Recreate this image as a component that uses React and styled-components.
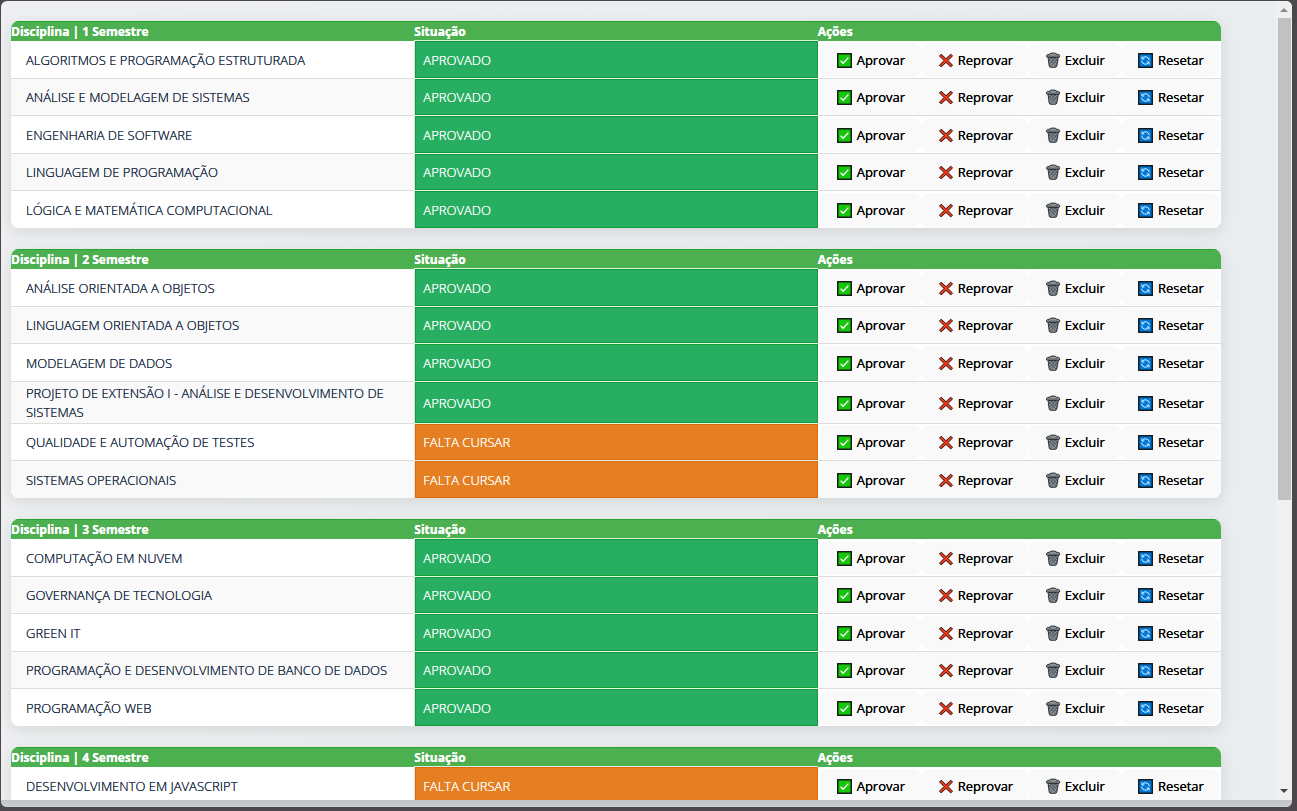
import React from "react";
import styled, { createGlobalStyle } from "styled-components";

const GlobalStyle = createGlobalStyle`
  * { box-sizing: border-box; }
  body {
    margin: 0;
    background: #4c484b;
    font-family: "Open Sans", "Noto Sans", sans-serif;
    overflow: hidden;
  }
`;

const Frame = styled.div`
  height: 100vh;
  padding: 1px 5px 4px 1px;
`;

const Window = styled.div`
  height: 100%;
  display: flex;
  flex-direction: column;
  border-radius: 6px;
  overflow: hidden;
  background: linear-gradient(to right, #edeff0, #e9edef);
`;

const Viewport = styled.div`
  flex: 1;
  min-height: 0;
  display: flex;
`;

const BottomEdge = styled.div`
  height: 7px;
  background: linear-gradient(#c0c4c5, #cdd0d1);
`;

const Content = styled.main`
  flex: 1;
  min-width: 0;
  overflow: hidden;
  display: flex;
  flex-direction: column;
  gap: 21px;
  padding: 20px 55px 0 10px;
`;

const Scrollbar = styled.div`
  width: 16px;
  display: flex;
  flex-direction: column;
  align-items: center;
  background: #f0f0f0;
`;

const ScrollArrow = styled.svg`
  width: 16px;
  height: 17px;
  flex: none;
`;

const Track = styled.div`
  flex: 1;
  width: 13px;
`;

const Thumb = styled.div`
  height: 63%;
  background: #c1c1c1;
`;

const Card = styled.section`
  flex: none;
  border-radius: 8px;
  overflow: hidden;
  background: #fff;
  box-shadow: 0 4px 16px rgba(0, 0, 0, 0.1);
`;

const Table = styled.table`
  width: 100%;
  table-layout: fixed;
  border-collapse: separate;
  border-spacing: 0;
`;

const HeadRow = styled.tr`
  height: 20px;
  background: #4caf50;
`;

const HeadCell = styled.th`
  padding: 0;
  text-align: left;
  font-size: 12px;
  line-height: 19px;
  font-weight: 700;
  color: #fff;
  text-shadow: 0 0 0 currentColor;
  border-top: 1px solid #25a52f;
  box-shadow: ${(p) => (p.$underlined ? "inset 0 -1px 0 #d9f2dc" : "none")};
`;

const Row = styled.tr`
  height: 38px;
  background: #fff;
  &:nth-child(even) {
    height: 37px;
    background: #f9f9f9;
  }
  &:nth-child(n + 5) {
    height: 37px;
  }
  &:last-child > td {
    border-bottom: 0;
  }
`;

const Cell = styled.td`
  padding: 0;
  border-bottom: 1px solid #dddddd;
`;

const NameCell = styled(Cell)`
  padding: 2px 15px 1px;
  font-size: 13px;
  line-height: 19px;
  font-weight: 300;
  color: #10253c;
  text-shadow: 0 0 0 currentColor;
`;

const StatusCell = styled(Cell)`
  padding: 1px 8px 0;
  font-size: 13px;
  line-height: 19px;
  font-weight: 300;
  color: #fff;
  text-shadow: 0 0 0 currentColor;
  border-left: 1px solid #e0e4e2;
  border-bottom-color: #e4f5e8;
  background: ${(p) => (p.$done ? "#27ae60" : "#e67e22")};
  box-shadow: inset 0 0 0 1px ${(p) => (p.$done ? "#129c3c" : "#dd6a10")};
`;

const Actions = styled.div`
  display: grid;
  grid-template-columns: 101fr 107fr 93fr 98fr;
  padding: 0 2px;
`;

const ActionButton = styled.button`
  height: 34px;
  display: flex;
  align-items: center;
  gap: 4px;
  padding: 0 0 0 17px;
  border: 0;
  border-radius: 8px;
  background: #f9f9f9;
  color: #000;
  font-family: inherit;
  font-size: 13px;
  font-weight: 400;
  text-shadow: 0 0 0 currentColor;
  white-space: nowrap;
  cursor: pointer;
`;

const Icon = styled.svg`
  width: 16px;
  height: 16px;
  flex: none;
`;

const CheckIcon = () => (
  <Icon viewBox="0 0 16 16" aria-hidden="true">
    <rect x="0.75" y="1.75" width="13.5" height="13.5" fill="#16c60c" stroke="#111" strokeWidth="1.4" />
    <path d="M3.6 8.7l2.500 2.500 5.300-5.600" fill="none" stroke="#fff" strokeWidth="1.300" />
  </Icon>
);

const CrossIcon = () => (
  <Icon viewBox="0 0 16 16" aria-hidden="true">
    <path
      d="M3.200 2.200L8 6.700l4.800-4.500 1.700 1.700L10 8.500l4.500 4.700-1.700 1.700L8 10.400l-4.800 4.500-1.700-1.700L6 8.500 1.500 3.900z"
      fill="#f03a17"
      stroke="#2a1210"
      strokeWidth="1"
      strokeLinejoin="round"
    />
  </Icon>
);

const TrashIcon = () => (
  <Icon viewBox="0 0 16 16" aria-hidden="true">
    <path d="M3 5l1.200 9q.3 1.300 1.800 1.300h4q1.500 0 1.800-1.300L13.400 5z" fill="#858e95" stroke="#222" strokeWidth="0.900" />
    <path
      d="M4.200 7l7.200 7.500M6 5.500l6.500 6.800M9.500 5.500l3.500 3.800M12.400 7l-7.200 7.500M10.500 5.500l-6.500 6.800M7 5.500l-3.500 3.800"
      stroke="#353b40"
      strokeWidth="0.600"
    />
    <path
      d="M1.600 5V3.600q0-.8.9-1L5.100 2l.8-.9h4.400l.8.900 2.600.6q.9.200.9 1V5q-6.500 1.400-13 0z"
      fill="#8f989e"
      stroke="#222"
      strokeWidth="0.900"
    />
    <path d="M3.600 3.900q4.500.9 9 0" fill="none" stroke="#4a5156" strokeWidth="0.900" />
  </Icon>
);

const ResetIcon = () => (
  <Icon viewBox="0 0 16 16" aria-hidden="true">
    <rect x="0.750" y="1.750" width="13.500" height="13.500" fill="#0078d7" stroke="#111" strokeWidth="1.400" />
    <g fill="none" stroke="#e2f1ff" strokeWidth="1">
      <path d="M4.200 6.700A3.800 3.800 0 0 1 11.300 8.300" />
      <path d="M10.800 10.300A3.800 3.800 0 0 1 3.700 8.700" />
      <path d="M4 4.500V7h2.300" />
      <path d="M11 12.500V10H8.700" />
    </g>
  </Icon>
);

const ACTIONS = [
  { label: "Aprovar", Glyph: CheckIcon },
  { label: "Reprovar", Glyph: CrossIcon },
  { label: "Excluir", Glyph: TrashIcon },
  { label: "Resetar", Glyph: ResetIcon },
];

const SEMESTERS = [
  [
    ["ALGORITMOS E PROGRAMAÇÃO ESTRUTURADA", true],
    ["ANÁLISE E MODELAGEM DE SISTEMAS", true],
    ["ENGENHARIA DE SOFTWARE", true],
    ["LINGUAGEM DE PROGRAMAÇÃO", true],
    ["LÓGICA E MATEMÁTICA COMPUTACIONAL", true],
  ],
  [
    ["ANÁLISE ORIENTADA A OBJETOS", true],
    ["LINGUAGEM ORIENTADA A OBJETOS", true],
    ["MODELAGEM DE DADOS", true],
    ["PROJETO DE EXTENSÃO I - ANÁLISE E DESENVOLVIMENTO DE SISTEMAS", true],
    ["QUALIDADE E AUTOMAÇÃO DE TESTES", false],
    ["SISTEMAS OPERACIONAIS", false],
  ],
  [
    ["COMPUTAÇÃO EM NUVEM", true],
    ["GOVERNANÇA DE TECNOLOGIA", true],
    ["GREEN IT", true],
    ["PROGRAMAÇÃO E DESENVOLVIMENTO DE BANCO DE DADOS", true],
    ["PROGRAMAÇÃO WEB", true],
  ],
  [["DESENVOLVIMENTO EM JAVASCRIPT", false]],
];

function SemesterTable({ number, courses }) {
  return (
    <Card>
      <Table>
        <thead>
          <HeadRow>
            <HeadCell scope="col">Disciplina | {number} Semestre</HeadCell>
            <HeadCell scope="col" $underlined>
              Situação
            </HeadCell>
            <HeadCell scope="col">Ações</HeadCell>
          </HeadRow>
        </thead>
        <tbody>
          {courses.map(([name, done]) => (
            <Row key={name}>
              <NameCell>{name}</NameCell>
              <StatusCell $done={done}>{done ? "APROVADO" : "FALTA CURSAR"}</StatusCell>
              <Cell>
                <Actions>
                  {ACTIONS.map(({ label, Glyph }) => (
                    <ActionButton key={label} type="button">
                      <Glyph />
                      {label}
                    </ActionButton>
                  ))}
                </Actions>
              </Cell>
            </Row>
          ))}
        </tbody>
      </Table>
    </Card>
  );
}

export default function App() {
  return (
    <>
      <GlobalStyle />
      <Frame>
        <Window>
          <Viewport>
            <Content>
              {SEMESTERS.map((courses, i) => (
                <SemesterTable key={i} number={i + 1} courses={courses} />
              ))}
            </Content>
            <Scrollbar aria-hidden="true">
              <ScrollArrow viewBox="0 0 16 17">
                <path d="M4 11l4-4 4 4z" fill="#8a8a8a" />
              </ScrollArrow>
              <Track>
                <Thumb />
              </Track>
              <ScrollArrow viewBox="0 0 16 17">
                <path d="M4 6l4 4 4-4z" fill="#444" />
              </ScrollArrow>
            </Scrollbar>
          </Viewport>
          <BottomEdge />
        </Window>
      </Frame>
    </>
  );
}
